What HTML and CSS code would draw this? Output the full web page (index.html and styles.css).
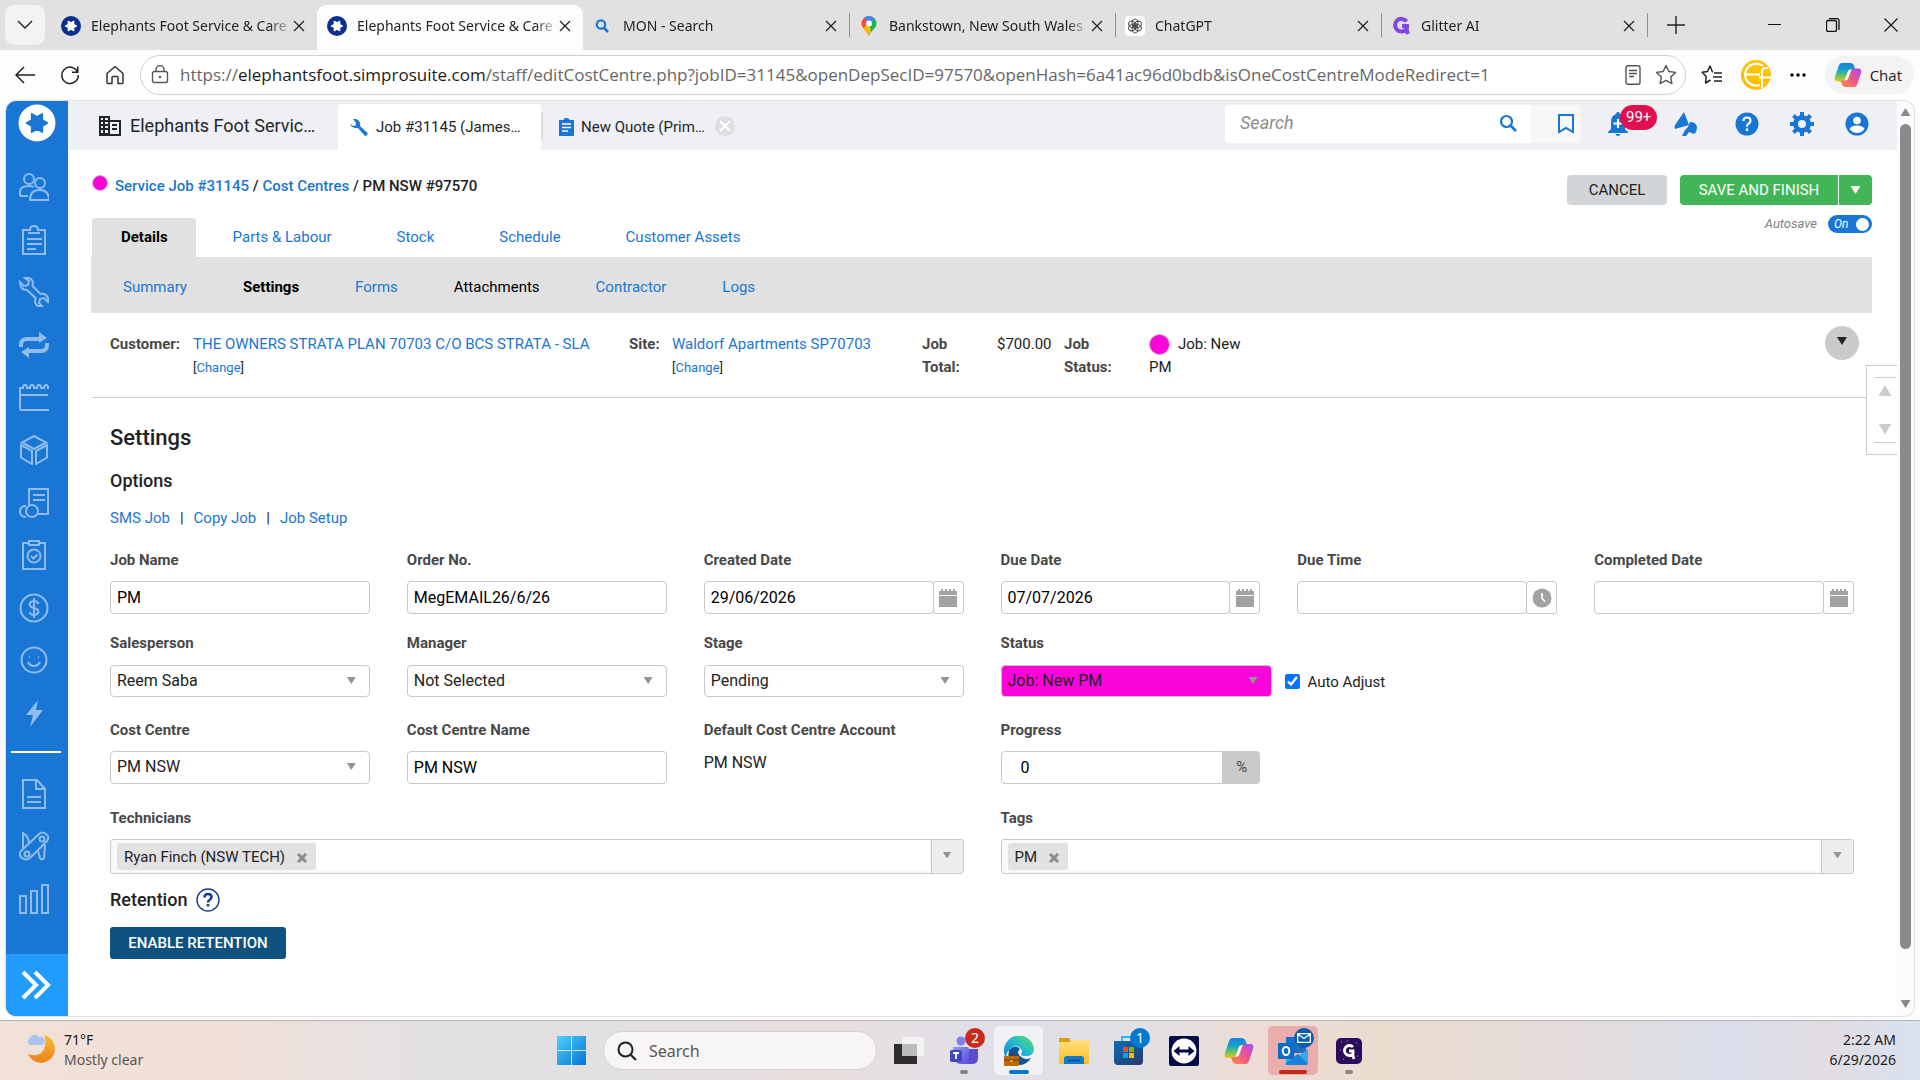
FILE: index.html
```html
<!DOCTYPE html>
<html lang="en">
<head>
<meta charset="utf-8">
<title>Elephants Foot Service &amp; Care</title>
<link rel="stylesheet" href="styles.css">
</head>
<body>
<svg class="defs" aria-hidden="true">
  <defs>
    <linearGradient id="cpa" x1="0" y1="0" x2="0" y2="1"><stop offset="0" stop-color="#1b7fe0"/><stop offset=".4" stop-color="#14a5c8"/><stop offset=".7" stop-color="#6cc35a"/><stop offset="1" stop-color="#f5c31c"/></linearGradient>
    <linearGradient id="cpb" x1="1" y1="0" x2="0" y2="1"><stop offset="0" stop-color="#a54cf0"/><stop offset=".5" stop-color="#f0568a"/><stop offset="1" stop-color="#ff8a3c"/></linearGradient>
    <linearGradient id="win" x1="0" y1="0" x2="1" y2="1"><stop offset="0" stop-color="#4fd0fb"/><stop offset="1" stop-color="#0672d6"/></linearGradient>
    <linearGradient id="moon" x1="0" y1="0" x2="0" y2="1"><stop offset="0" stop-color="#f5c02c"/><stop offset="1" stop-color="#ef7f1d"/></linearGradient>
    <linearGradient id="edge" x1="0" y1="1" x2="1" y2="0"><stop offset="0" stop-color="#1585d8"/><stop offset=".5" stop-color="#21b7d6"/><stop offset="1" stop-color="#5fe05f"/></linearGradient>
    <linearGradient id="fold" x1="0" y1="0" x2="0" y2="1"><stop offset="0" stop-color="#ffe07a"/><stop offset="1" stop-color="#fbbd2d"/></linearGradient>
    <linearGradient id="store" x1="0" y1="0" x2="1" y2="1"><stop offset="0" stop-color="#0c6bb8"/><stop offset="1" stop-color="#2a3a66"/></linearGradient>
    <linearGradient id="teams" x1="0" y1="0" x2="1" y2="1"><stop offset="0" stop-color="#8f9bff"/><stop offset="1" stop-color="#5a4bd8"/></linearGradient>
    <symbol id="close" viewBox="0 0 12 12"><path d="M1 1l10 10M11 1L1 11" fill="none" stroke="#222" stroke-width="1.3"/></symbol>
    <symbol id="star6" viewBox="0 0 20 20"><path d="M18 10L14 12.300 14 16.900 10 14.600 6 16.900 6 12.300 2 10 6 7.700 6 3.100 10 5.400 14 3.100 14 7.700z" stroke="currentColor" stroke-width="1.500" stroke-linejoin="round" fill="currentColor"/></symbol>
    <symbol id="fav" viewBox="0 0 20 20"><circle cx="10" cy="10" r="10" fill="#0b2f8f"/><use href="#star6" x="3" y="3" width="14" height="14" color="#fff"/></symbol>
    <symbol id="copilot" viewBox="0 0 30 28"><path d="M8 1h9c3 0 4 1 5 4l1 3h-5c-2 0-3 1-4 4l-2 6c-1 2-2 3-4 3H4c-3 0-4-2-3-5L5 4c1-2 2-3 3-3z" fill="url(#cpa)"/><path d="M22 27h-9c-3 0-4-1-5-4l-1-3h5c2 0 3-1 4-4l2-6c1-2 2-3 4-3h4c3 0 4 2 3 5l-4 12c-1 2-2 3-3 3z" fill="url(#cpb)"/><path d="M17 9l-4 10" stroke="#fff" stroke-width="2"/></symbol>
    <symbol id="cal" viewBox="0 0 20 20"><path d="M1 3h2V1h2v2h2V1h2v2h2V1h2v2h2V1h2v2h2v4H1zM1 8h18v11H1z" fill="#a2a2a2"/></symbol>
  </defs>
</svg>

<header class="tabstrip">
  <button class="tabmenu" aria-label="Tab actions"><svg width="16" height="10" viewBox="0 0 16 10"><path d="M1 1l7 7 7-7" fill="none" stroke="#222" stroke-width="1.4"/></svg></button>
  <div class="btab"><svg class="bicon"><use href="#fav"/></svg><span class="btext">Elephants Foot Service &amp; Care</span><svg class="bx"><use href="#close"/></svg></div>
  <div class="btab current"><svg class="bicon"><use href="#fav"/></svg><span class="btext">Elephants Foot Service &amp; Care</span><svg class="bx"><use href="#close"/></svg></div>
  <div class="btab"><svg class="bicon" viewBox="0 0 20 20"><circle cx="8" cy="8.500" r="4.200" fill="none" stroke="#1b78d4" stroke-width="2.200"/><path d="M11 12l4 4" stroke="#1b78d4" stroke-width="2.500"/></svg><span class="btext">MON - Search</span><svg class="bx"><use href="#close"/></svg></div>
  <div class="btab split"><svg class="bicon" viewBox="0 0 20 20"><path d="M10 0a7.500 7.500 0 0 0-7.500 7.500c0 5 5.500 6.500 7.500 12.500z" fill="#f0483e"/><path d="M10 0a7.500 7.500 0 0 1 7.500 7.500c0 5-5.500 6.500-7.500 12.500z" fill="#1fb45a"/><path d="M5 2a7.500 7.500 0 0 1 11 1l-6 5z" fill="#4a86f5"/><path d="M4 12l6-5 2 8-2 5c-1-4-4-5-6-8z" fill="#fbbc04"/><circle cx="10" cy="7.500" r="3" fill="#fff"/></svg><span class="btext">Bankstown, New South Wales</span><svg class="bx"><use href="#close"/></svg></div>
  <div class="btab split"><svg class="bicon" viewBox="0 0 20 20"><rect width="20" height="20" rx="4" fill="#fff"/><g fill="none" stroke="#444" stroke-width=".9"><ellipse cx="10" cy="7" rx="3" ry="4"/><ellipse cx="10" cy="7" rx="3" ry="4" transform="rotate(60 10 10)"/><ellipse cx="10" cy="7" rx="3" ry="4" transform="rotate(120 10 10)"/><ellipse cx="10" cy="7" rx="3" ry="4" transform="rotate(180 10 10)"/><ellipse cx="10" cy="7" rx="3" ry="4" transform="rotate(240 10 10)"/><ellipse cx="10" cy="7" rx="3" ry="4" transform="rotate(300 10 10)"/></g></svg><span class="btext">ChatGPT</span><svg class="bx"><use href="#close"/></svg></div>
  <div class="btab split"><svg class="bicon" viewBox="0 0 20 20"><path d="M15.500 5.500A6.300 6.300 0 1 0 16 12v-2h-5M15 12l2 6" fill="none" stroke="#8148e0" stroke-width="4"/></svg><span class="btext">Glitter AI</span><svg class="bx"><use href="#close"/></svg></div>
  <button class="newtab" aria-label="New tab"><svg width="18" height="18" viewBox="0 0 18 18"><path d="M9 0v18M0 9h18" stroke="#222" stroke-width="1.400"/></svg></button>
  <div class="winctl">
    <button aria-label="Minimize"><svg width="14" height="14" viewBox="0 0 14 14"><path d="M0 6.500h13" stroke="#111"/></svg></button>
    <button aria-label="Restore"><svg width="14" height="14" viewBox="0 0 14 14"><rect x=".5" y="2.500" width="10" height="11" rx="1.500" fill="none" stroke="#111" stroke-width="1.300"/><path d="M3 .7h8q2 0 2 2V12" fill="none" stroke="#111" stroke-width="1.300"/></svg></button>
    <button aria-label="Close"><svg width="14" height="14" viewBox="0 0 14 14"><path d="M.5.5l13 13M13.500.5l-13 13" stroke="#111" stroke-width="1.100"/></svg></button>
  </div>
</header>

<div class="toolbar">
  <div class="navbtns">
    <button aria-label="Back"><svg width="20" height="18" viewBox="0 0 20 18"><path d="M20 9H1M9 1L1 9l8 8" fill="none" stroke="#222" stroke-width="1.500"/></svg></button>
    <button aria-label="Refresh"><svg width="20" height="20" viewBox="0 0 20 20"><path d="M17.500 7A8.200 8.200 0 1 0 18.200 10M17.800 1.500V7.200H12" fill="none" stroke="#222" stroke-width="1.500"/></svg></button>
    <button aria-label="Home"><svg width="20" height="20" viewBox="0 0 20 20"><path d="M2 8.500L10 1.500l8 7V17.500q0 1-1 1h-4v-6q0-1-1-1h-4q-1 0-1 1v6H3q-1 0-1-1z" fill="none" stroke="#333" stroke-width="1.500" stroke-linejoin="round"/></svg></button>
  </div>
  <div class="omnibox">
    <svg width="18" height="20" viewBox="0 0 18 20"><rect x="1.500" y="6.500" width="15" height="11" rx="2" fill="none" stroke="#555" stroke-width="1.400"/><path d="M5 6.500V4.500a4 4 0 0 1 8 0v2" fill="none" stroke="#555" stroke-width="1.400"/><circle cx="9" cy="12" r="1.300" fill="#555"/></svg>
    <span class="url">https://<b>elephantsfoot.simprosuite.com</b>/staff/editCostCentre.php?jobID=31145&amp;openDepSecID=97570&amp;openHash=6a41ac96d0bdb&amp;isOneCostCentreModeRedirect=1</span>
    <svg width="16" height="20" viewBox="0 0 16 20"><rect x="1" y=".7" width="14" height="18.600" rx="2" fill="none" stroke="#555" stroke-width="1.400"/><path d="M4 5.500h8M4 8.500h8M4 11.500h5" stroke="#555" stroke-width="1.300"/></svg>
    <svg width="22" height="22" viewBox="0 0 22 22"><path d="M11 1.500l2.900 6 6.600.9-4.800 4.600 1.200 6.600-5.900-3.200-5.900 3.200 1.200-6.600L1.500 8.400l6.600-.9z" fill="none" stroke="#555" stroke-width="1.400" stroke-linejoin="round"/></svg>
  </div>
  <div class="tools">
    <svg width="22" height="22" viewBox="0 0 22 22"><path d="M12 7.800h-.6L9 2 6.500 7.500 1.200 8.200l4 4.300L4.500 19l5-3M13 9h8M12 13h9M13 17h8" fill="none" stroke="#222" stroke-width="1.500" stroke-linejoin="round"/></svg>
    <svg width="30" height="30" viewBox="0 0 30 30"><circle cx="15" cy="15" r="15" fill="#fcc200"/><path d="M22 6A11 11 0 1 0 19 25" fill="none" stroke="#fff" stroke-width="2.200"/><path d="M3 14.500h16M21 28V12q0-4 4-4h2M18 17.500h12" fill="none" stroke="#fff" stroke-width="2"/></svg>
    <svg width="18" height="4" viewBox="0 0 18 4"><circle cx="3" cy="2" r="1.700"/><circle cx="9" cy="2" r="1.700"/><circle cx="15" cy="2" r="1.700"/></svg>
    <button class="chat"><svg width="28" height="26"><use href="#copilot"/></svg>Chat</button>
  </div>
</div>

<div class="frame">
  <aside class="side">
    <a class="logo" href="#" aria-label="Home"><svg width="38" height="38" viewBox="0 0 38 38"><circle cx="19" cy="19" r="18.500" fill="#fff"/><use href="#star6" x="6" y="6" width="26" height="26" color="#1a76d5"/></svg></a>
    <nav class="menu main">
      <a href="#" aria-label="People"><svg viewBox="0 0 30 30"><circle cx="10" cy="7" r="5"/><path d="M1 24v-4q0-6 9-6 3 0 5 1M1 24h8"/><circle cx="21" cy="11" r="5"/><path d="M11 28q0-10 9.500-10T30 28z"/></svg></a>
      <a href="#" aria-label="Quotes"><svg viewBox="0 0 30 30"><path d="M4 5h7q0-4 4-4t4 4h7v24H4zM9 8h12M8 14h15M8 19h15M8 24h9"/></svg></a>
      <a href="#" aria-label="Jobs"><svg viewBox="0 0 30 30"><path d="M1 5l4 4 4-1 1-4-4-3q6-1 8 4l-.5 4 8 8q5-1 7 3 1.500 3 .5 5l-4-4-4 1-1 4 3 3q-6 1-7-4l.5-4-8.500-8Q1 13 1 5z"/></svg></a>
      <a href="#" aria-label="Recurring"><svg viewBox="0 0 30 30"><path class="thick" d="M2 17v-2q0-6 6-6h14M28 13v2q0 6-6 6H8"/><path class="fill" d="M20 2l8 6-8 5zM10 17l-8 5 8 6z"/></svg></a>
      <a href="#" aria-label="Schedules"><svg viewBox="0 0 30 30"><path d="M1 5h3q0-3 2-3t2 3h3q0-3 2-3t2 3h3q0-3 2-3t2 3h3q0-3 2-3t2 3h2v21q0 1-1 1H2q-1 0-1-1zM1 12h28" /></svg></a>
      <a href="#" aria-label="Stock"><svg viewBox="0 0 30 30"><path d="M15 1l12 6.500L15 14 3 7.500zM2 10l11 6v13L2 22.500zM28 10l-11 6v13l11-6.500z"/></svg></a>
      <a href="#" aria-label="Accounts"><svg viewBox="0 0 30 30"><path d="M10 17V1h19v25H18M14 7h12M14 12h12"/><circle cx="13" cy="23" r="6"/><path d="M7 18q-6 0-6 5.500T7 29"/></svg></a>
      <a href="#" aria-label="Tasks"><svg viewBox="0 0 30 30"><path d="M10 3H4v26h22V3h-6M10 1h10v4H10z"/><circle cx="15" cy="16" r="6.500"/><path d="M12 16l2.500 2.500 4-4"/></svg></a>
      <a href="#" aria-label="Payments"><svg viewBox="0 0 30 30"><circle cx="15" cy="15" r="13.500"/><path d="M19.500 11q-1-3-4.500-3t-4.500 3q0 3 4.500 4t4.500 4q-1 3-4.500 3t-4.500-3M15 5v20"/></svg></a>
      <a href="#" aria-label="Feedback"><svg viewBox="0 0 30 30"><circle cx="15" cy="15" r="12.500"/><path d="M9 17q2 4 6 4t6-4M10 12h1M19 12h1"/></svg></a>
      <a href="#" aria-label="Activity"><svg viewBox="0 0 30 30"><path class="fill" d="M19 2L7 17h7l-3 12L24 12h-7z"/></svg></a>
    </nav>
    <hr class="rule">
    <nav class="menu sub">
      <a href="#" aria-label="Forms"><svg viewBox="0 0 30 30"><path d="M4 1h14l8 9v19H4zM17 1v9h9M8 18h14M8 23h14"/></svg></a>
      <a href="#" aria-label="Utilities"><svg viewBox="0 0 30 30"><path d="M2 20L20 3q3-3 7 0t1 7L11 27q-4 3-8 0t-1-7z"/><circle cx="8" cy="23" r="2.500"/><circle cx="23" cy="8" r="2.500"/><path d="M4 17V2q6 4 6 10M19 20l2 7q2 3 4 0l1-13"/></svg></a>
      <a href="#" aria-label="Reports"><svg viewBox="0 0 30 30"><path d="M1 12h6v17H1zM12 7h6v22h-6zM23 1h6v28h-6z"/></svg></a>
    </nav>
    <button class="expand" aria-label="Expand menu"><svg width="30" height="30" viewBox="0 0 30 30"><path d="M2 2l13 13L2 28M14 2l13 13-13 13" fill="none" stroke="#fff" stroke-width="4"/></svg></button>
  </aside>

  <div class="app">
    <header class="topbar">
      <a class="company" href="#"><svg width="22" height="20" viewBox="0 0 22 20"><path d="M0 0h11v4h11v16H0z" fill="#22262c"/><path d="M2 2h2v2H2zM6 2h3v2H6zM2 6h2v2H2zM6 6h3v2H6zM2 10h2v2H2zM6 10h3v2H6zM2 14h2v3H2zM6 14h3v3H6zM11 6h9v12h-9z" fill="#eff0f3"/><path d="M13 8h5v2h-5zM13 12h5v2h-5z" fill="#22262c"/></svg>Elephants Foot Servic…</a>
      <a class="doc open" href="#"><svg width="19" height="19" viewBox="0 0 19 19"><path d="M6 1a5.500 5.500 0 0 1 4 7l8 7.500L15.500 18.500 8 10Q2 11 0 5.500l3 2.500 2.500-.5L6 5 3 1z" fill="#1a76d5"/></svg>Job #31145 (James…</a>
      <a class="doc" href="#"><svg width="15" height="18" viewBox="0 0 15 18"><path d="M0 2h4.500q0-2 3-2t3 2H15v16H0z" fill="#1a76d5"/><path d="M3 6h9M3 9.500h9M3 13h6" stroke="#fff" stroke-width="1.500"/></svg>New Quote (Prim…</a>
      <button class="shut" aria-label="Close tab"><svg width="20" height="20" viewBox="0 0 20 20"><circle cx="10" cy="10" r="10" fill="#dedede"/><path d="M5 5l10 10M15 5L5 15" stroke="#fff" stroke-width="2"/></svg></button>
      <div class="find"><input type="text" placeholder="Search" aria-label="Search"><svg width="18" height="18" viewBox="0 0 18 18"><circle cx="7.500" cy="7.500" r="5.500" fill="none" stroke="#1a76d5" stroke-width="2.200"/><path d="M11.500 11.500L17 17" stroke="#1a76d5" stroke-width="2.600"/></svg></div>
      <button class="mark" aria-label="Bookmark"><svg width="16" height="20" viewBox="0 0 16 20"><path d="M1 1h14v17l-7-4-7 4z" fill="none" stroke="#1a76d5" stroke-width="2"/></svg></button>
      <div class="acts">
        <button class="bell" aria-label="Notifications"><svg width="24" height="24" viewBox="0 0 24 24"><path d="M12 0q2 0 2 2 5 2 5 8v7l3 3v1H2v-1l3-3v-7q0-6 5-8 0-2 2-2zM9.500 22h5q-.5 2-2.500 2t-2.500-2z" fill="#1a76d5"/><path d="M12 7v9M7.500 11.500h9" stroke="#fff" stroke-width="2"/></svg><span class="badge">99+</span></button>
        <button class="horn" aria-label="Announcements"><svg width="24" height="24" viewBox="0 0 24 24"><path d="M10 0l5 13L1 17q-1-2 0-4zM14 15l2-5q6 0 7 5 0 5-3 7l-5-2-3 4H8l3-6z" fill="#1a76d5"/></svg></button>
        <button aria-label="Help"><svg width="24" height="24" viewBox="0 0 24 24"><circle cx="12" cy="12" r="11.500" fill="#1a76d5"/><path d="M8.500 9q0-3.500 3.500-3.500t3.500 3q0 2-2 3.200-1.500 1-1.500 3M12 16.500v2.500" fill="none" stroke="#fff" stroke-width="2.200"/></svg></button>
        <button aria-label="Settings"><svg width="24" height="24" viewBox="0 0 24 24"><circle cx="12" cy="12" r="6.500" fill="none" stroke="#1a76d5" stroke-width="5"/><path d="M12 0v4M12 20v4M0 12h4M20 12h4M3.500 3.500l3 3M17.500 17.500l3 3M3.500 20.500l3-3M17.500 6.500l3-3" stroke="#1a76d5" stroke-width="4"/></svg></button>
        <button aria-label="Account"><svg width="24" height="24" viewBox="0 0 24 24"><circle cx="12" cy="12" r="11.500" fill="#1a76d5"/><circle cx="12" cy="8.500" r="3.800" fill="#fff"/><path d="M4.500 17q1.500-3.500 7.500-3.500t7.500 3.500q-3 4-7.500 4T4.500 17z" fill="#fff"/></svg></button>
      </div>
    </header>

    <main class="content">
      <div class="pagehead">
        <div class="crumbs"><i class="dot"></i><span><a href="#">Service Job #31145</a> / <a href="#">Cost Centres</a> / PM NSW #97570</span></div>
        <div class="saving">
          <div class="btnrow"><button class="cancel">CANCEL</button><div class="savegrp"><button class="save">SAVE AND FINISH</button><button class="more" aria-label="More save options"><i class="tri"></i></button></div></div>
          <label class="auto">Autosave <span class="switch"><input type="checkbox" checked>On</span></label>
        </div>
        <nav class="tabs"><a class="on" href="#">Details</a><a href="#">Parts &amp; Labour</a><a href="#">Stock</a><a href="#">Schedule</a><a href="#">Customer Assets</a></nav>
      </div>
      <nav class="subtabs"><a href="#">Summary</a><a class="on" href="#">Settings</a><a href="#">Forms</a><a class="dark" href="#">Attachments</a><a href="#">Contractor</a><a href="#">Logs</a></nav>

      <section class="info">
        <b class="w-cust">Customer:</b>
        <div class="v-cust"><a href="#">THE OWNERS STRATA PLAN 70703 C/O BCS STRATA - SLA</a><br><small>[<a href="#">Change</a>]</small></div>
        <b class="w-site">Site:</b>
        <div class="v-site"><a href="#">Waldorf Apartments SP70703</a><br><small>[<a href="#">Change</a>]</small></div>
        <b class="w-total">Job<br>Total:</b>
        <div class="v-total">$700.00</div>
        <b class="w-stat">Job<br>Status:</b>
        <div class="v-stat"><span class="newrow"><i class="dot big"></i>Job: New</span>PM</div>
        <button class="round" aria-label="Show more"><i class="tri"></i></button>
      </section>
      <div class="jump"><button aria-label="Scroll to top"><i class="tri up"></i></button><button aria-label="Scroll to bottom"><i class="tri"></i></button></div>

      <section class="form">
        <h1>Settings</h1>
        <h2>Options</h2>
        <div class="links"><a href="#">SMS Job</a><span>|</span><a href="#">Copy Job</a><span>|</span><a href="#">Job Setup</a></div>

        <div class="row first">
          <div><label for="jn">Job Name</label><input id="jn" class="ctl" value="PM"></div>
          <div><label for="on">Order No.</label><input id="on" class="ctl" value="MegEMAIL26/6/26"></div>
          <div><label for="cd">Created Date</label><div class="pick"><input id="cd" class="ctl" value="29/06/2026"><button aria-label="Pick created date"><svg width="20" height="20"><use href="#cal"/></svg></button></div></div>
          <div><label for="dd">Due Date</label><div class="pick"><input id="dd" class="ctl" value="07/07/2026"><button aria-label="Pick due date"><svg width="20" height="20"><use href="#cal"/></svg></button></div></div>
          <div><label for="dt">Due Time</label><div class="pick"><input id="dt" class="ctl"><button aria-label="Pick due time"><svg width="20" height="20" viewBox="0 0 20 20"><circle cx="10" cy="10" r="9.500" fill="#a2a2a2"/><path d="M10 5v5.500l3 3" fill="none" stroke="#fff" stroke-width="1.600"/></svg></button></div></div>
          <div><label for="fd">Completed Date</label><div class="pick"><input id="fd" class="ctl"><button aria-label="Pick completed date"><svg width="20" height="20"><use href="#cal"/></svg></button></div></div>
        </div>

        <div class="row second">
          <div><label for="sp">Salesperson</label><div class="sel"><select id="sp"><option>Reem Saba</option></select></div></div>
          <div><label for="mg">Manager</label><div class="sel"><select id="mg"><option>Not Selected</option></select></div></div>
          <div><label for="st">Stage</label><div class="sel"><select id="st"><option>Pending</option></select></div></div>
          <div class="span2"><label for="ss">Status</label><div class="statrow"><div class="sel pink"><select id="ss"><option>Job: New PM</option></select></div><label class="adjust"><input type="checkbox" checked>Auto Adjust</label></div></div>
        </div>

        <div class="row third">
          <div><label for="cc">Cost Centre</label><div class="sel"><select id="cc"><option>PM NSW</option></select></div></div>
          <div><label for="cn">Cost Centre Name</label><input id="cn" class="ctl" value="PM NSW"></div>
          <div><span class="lab">Default Cost Centre Account</span><p class="plain">PM NSW</p></div>
          <div><label for="pg">Progress</label><div class="pick pct"><input id="pg" class="ctl" value="0"><span>%</span></div></div>
        </div>

        <div class="row fourth">
          <div class="span3"><label for="tc">Technicians</label><div class="chips"><span class="chip">Ryan Finch (NSW TECH)<button aria-label="Remove Ryan Finch"><svg width="10" height="10" viewBox="0 0 10 10"><path d="M1 1l8 8M9 1L1 9" stroke="#8c8c8c" stroke-width="3"/></svg></button></span><input id="tc"><button class="drop" aria-label="Choose technicians"><i class="tri"></i></button></div></div>
          <div class="span3"><label for="tg">Tags</label><div class="chips"><span class="chip">PM<button aria-label="Remove PM"><svg width="10" height="10" viewBox="0 0 10 10"><path d="M1 1l8 8M9 1L1 9" stroke="#8c8c8c" stroke-width="3"/></svg></button></span><input id="tg"><button class="drop" aria-label="Choose tags"><i class="tri"></i></button></div></div>
        </div>

        <h2 class="ret">Retention <svg width="24" height="24" viewBox="0 0 24 24"><circle cx="12" cy="12" r="11" fill="none" stroke="#173d96" stroke-width="1.400"/><path d="M8.500 9.500q0-3.500 3.500-3.500t3.500 3q0 1.800-2 3-1.500 1-1.500 2.500M12 16v2.500" fill="none" stroke="#173d96" stroke-width="2.600"/></svg></h2>
        <button class="enable">ENABLE RETENTION</button>
      </section>
    </main>
  </div>

  <div class="scroll" aria-hidden="true"><i class="tri up"></i><div class="track"><div class="thumb"></div></div><i class="tri"></i></div>
</div>

<footer class="taskbar">
  <div class="weather"><svg width="30" height="30" viewBox="0 0 30 30"><path d="M19 2a14 14 0 1 1-16 19q12 4 16-5 3-7 0-14z" fill="url(#moon)"/><path d="M5 12a4 4 0 0 1 0-7 5 5 0 0 1 9-1 4 4 0 0 1 3 8z" fill="#a9c4f2"/></svg><div>71°F<br><span>Mostly clear</span></div></div>
  <div class="apps">
    <button aria-label="Start"><svg width="29" height="29" viewBox="0 0 29 29"><path d="M0 0h14v14H0zM15 0h14v14H15zM0 15h14v14H0zM15 15h14v14H15z" fill="url(#win)"/></svg></button>
    <label class="tsearch"><svg width="20" height="20" viewBox="0 0 20 20"><circle cx="8.500" cy="8.500" r="7" fill="none" stroke="#222" stroke-width="2"/><path d="M13.500 13.500l5.500 5.500" stroke="#222" stroke-width="2.200"/></svg><input placeholder="Search" aria-label="Taskbar search"></label>
    <button aria-label="Task view"><svg width="30" height="30" viewBox="0 0 30 30"><path d="M0 8h23v20H0z" fill="#2e2e2e"/><path d="M8 1h22v19H8z" fill="#fff" fill-opacity=".6"/><path d="M8 8h15v12H8z" fill="#bbb"/></svg></button>
    <button class="run" aria-label="Teams"><svg width="30" height="30" viewBox="0 0 30 30"><circle cx="12" cy="5" r="4.500" fill="#7b83eb"/><path d="M18 13h11v9q0 6-6 6h-6z" fill="#5b4ed0"/><path d="M4 11h14q2 0 2 2v15h-8q-7 0-8-8z" fill="url(#teams)"/><rect x="1" y="14" width="12" height="12" rx="2" fill="#4048b8"/><path d="M4 17h6M7 17v6" stroke="#fff" stroke-width="1.800"/></svg><span class="cnt red">2</span></button>
    <button class="run tile" aria-label="Edge"><svg width="30" height="30" viewBox="0 0 30 30"><path d="M0 15A15 15 0 0 1 30 14q-1 6-8 6-5 0-5-2 2-2 0-5-5-6-12 1Q1 18 3 23q-3-3-3-8z" fill="url(#edge)"/><path d="M5 14q6-6 11-1-4 3 0 7 5 5 11 2-5 8-14 7Q3 26 5 14z" fill="#12559c"/><rect y="20" width="15" height="10" rx="1" fill="#bd6a0c"/><path d="M0 24h15M5 20v-2h5v2" fill="none" stroke="#6d3903"/><circle cx="7.500" cy="25" r="1" fill="#ffd75a"/></svg></button>
    <button aria-label="File Explorer"><svg width="30" height="28" viewBox="0 0 30 28"><path d="M0 2q0-1 1-1h9l2 3v5H0z" fill="#dd9a10"/><path d="M0 5h10l3-2h16q1 0 1 1v22q0 1-1 1H1q-1 0-1-1z" fill="url(#fold)"/><path d="M5 27v-5q0-3 3-3h14q3 0 3 3v5z" fill="#1577c8"/><path d="M9 23.500h12" stroke="#0b4c8c" stroke-width="1.500"/></svg></button>
    <button aria-label="Store"><svg width="30" height="30" viewBox="0 0 30 30"><path d="M8 5V1h13v4" fill="none" stroke="#30b5e8" stroke-width="2"/><path d="M0 5h29v20q0 4-4 4H4q-4 0-4-4z" fill="url(#store)"/><path d="M9 11h5v5H9z" fill="#f25022"/><path d="M15 11h5v5h-5z" fill="#7fba00"/><path d="M9 17h5v5H9z" fill="#00a4ef"/><path d="M15 17h5v5h-5z" fill="#ffb900"/></svg><span class="cnt blue">1</span></button>
    <button aria-label="TeamViewer"><svg width="30" height="30" viewBox="0 0 30 30"><rect width="30" height="30" rx="2" fill="#030a48"/><circle cx="15" cy="15" r="12.500" fill="#fff"/><path d="M4.500 15l6-5v3.500h9V10l6 5-6 5v-3.500h-9V20z" fill="#030a48"/></svg></button>
    <button aria-label="Copilot"><svg width="30" height="28"><use href="#copilot"/></svg></button>
    <button class="run alert" aria-label="Outlook"><svg width="30" height="30" viewBox="0 0 30 30"><path d="M8 1h20v16H8z" fill="#1a6fc4"/><path d="M8 13l11 8 11-8v14q0 2-2 2H8z" fill="#35a9ec"/><path d="M8 27l12-9 10 10q-1 1-2 1H8z" fill="#1682d8"/><rect y="7" width="16" height="16" rx="1" fill="#0f6cc0"/><ellipse cx="8" cy="15" rx="3.300" ry="4" fill="none" stroke="#fff" stroke-width="2"/></svg><span class="cnt mail"><svg width="14" height="10" viewBox="0 0 14 10"><path d="M.7.7h12.600v8.600H.7zM.7 1L7 5.500 13.300 1" fill="none" stroke="#fff" stroke-width="1.300"/></svg></span></button>
    <button class="run" aria-label="Glitter"><svg width="26" height="26" viewBox="0 0 26 26"><rect width="26" height="26" rx="5" fill="#2a0b5c"/><path d="M17 9a5 5 0 1 0 0 7v-3h-4M16 15l2 6" fill="none" stroke="#fff" stroke-width="2.800"/><path d="M5 4h1M20 5h1M4 12h1M21 18h1M7 21h1M11 3h1" stroke="#b99af0" stroke-width="1.200"/></svg></button>
  </div>
  <div class="clock">2:22 AM<br>6/29/2026</div>
</footer>
</body>
</html>
```

FILE: styles.css
```css
* { box-sizing: border-box; }
body {
  margin: 0;
  height: 100vh;
  display: flex;
  flex-direction: column;
  background: #fdfdfd;
  font: 15px/24px Roboto, sans-serif;
  color: #222;
  overflow: hidden;
}
button { border: 0; background: none; padding: 0; margin: 0; font: inherit; color: inherit; display: flex; align-items: center; justify-content: center; }
input, select { font: inherit; color: inherit; margin: 0; min-width: 0; }
a { color: #1a76d5; text-decoration: none; }
svg { flex: none; }
.defs { position: absolute; width: 0; height: 0; }
.tri { width: 10px; height: 8px; background: currentColor; clip-path: polygon(0 0, 100% 0, 50% 100%); flex: none; }
.tri.up { clip-path: polygon(50% 0, 100% 100%, 0 100%); }

/* Browser tab strip */
.tabstrip { display: flex; height: 50px; padding: 5px 0 0 5px; background: #e1e1e1; font: 14px/22px "Noto Sans", sans-serif; }
.tabmenu { width: 40px; height: 40px; border-radius: 9px; background: #f3f3f3; margin-right: 6px; }
.btab { flex: 0 1 266px; display: flex; align-items: center; padding: 0 12px 4px 10px; position: relative; min-width: 0; }
.btab.current { background: #fdfdfd; border-radius: 9px 9px 0 0; }
.bicon { width: 20px; height: 20px; margin-right: 10px; }
.btext { flex: 1; white-space: nowrap; overflow: hidden; -webkit-mask-image: linear-gradient(to right, #000 88%, transparent); mask-image: linear-gradient(to right, #000 88%, transparent); }
.bx { width: 12px; height: 12px; }
.split::before { content: ""; position: absolute; left: 0; top: 8px; width: 1px; height: 24px; background: #909090; }
.newtab { width: 52px; height: 24px; margin-top: 8px; padding: 0 10px 0 14px; border-left: 1px solid #909090; }
.winctl { margin-left: auto; display: flex; height: 40px; }
.winctl button { width: 58px; }

/* Address bar */
.toolbar { display: flex; align-items: center; height: 50px; font: 17px/24px "Open Sans", sans-serif; }
.navbtns { display: flex; width: 140px; padding-left: 15px; gap: 25px; }
.omnibox { flex: 1; display: flex; align-items: center; height: 40px; padding: 0 8px 0 10px; gap: 11px; border: 1px solid #cfcfcf; border-radius: 20px; background: #fff; min-width: 0; }
.omnibox svg + svg { margin-left: 3px; }
.url { flex: 1; white-space: nowrap; overflow: hidden; color: #666; }
.url b { font-weight: 400; color: #1b1b1b; }
.tools { display: flex; align-items: center; padding: 0 6px 0 15px; gap: 18px; }
.chat { height: 38px; padding: 0 12px 0 9px; gap: 8px; border-radius: 19px; background: #f3f3f3; font-size: 15px; }

/* Page frame */
.frame { flex: 1; display: flex; margin: 1px 6px 4px; min-height: 0; border-radius: 10px; overflow: hidden; background: #fff; box-shadow: 0 0 2px #999; }
.side { width: 62px; flex: none; display: flex; flex-direction: column; background: #1a76d5; }
.logo { height: 60px; display: flex; justify-content: center; padding-top: 3px; }
.menu { display: flex; flex-direction: column; }
.menu.main { flex: 11; }
.menu.sub { flex: 3; margin-bottom: 29px; }
.menu a { flex: 1; display: flex; align-items: center; justify-content: center; padding-right: 6px; }
.menu svg { width: 30px; height: 30px; fill: none; stroke: #8fbcec; stroke-width: 2; }
.menu .thick { stroke-width: 4; }
.menu .fill { fill: #8fbcec; stroke: none; }
.rule { width: 50px; margin: 12px 0 14px 5px; border: 0; border-top: 2px solid #fff; }
.expand { height: 62px; padding-right: 2px; background: #229bff; }

.app { flex: 1; min-width: 0; display: flex; flex-direction: column; }
.topbar { height: 49px; display: flex; align-items: center; background: #eff0f3; padding-right: 28px; }
.company { width: 270px; padding-left: 31px; display: flex; align-items: center; gap: 9px; font-size: 18px; color: #22262c; white-space: nowrap; }
.doc { display: flex; align-items: center; gap: 7px; padding: 3px 12px 0 16px; border-left: 2px solid #dcdde0; height: 28px; font-size: 15px; color: #22262c; white-space: nowrap; }
.doc.open { align-self: flex-end; height: 46px; width: 203px; padding: 0 12px; background: #fff; border: 0; border-radius: 4px 4px 0 0; }
.shut { margin-left: -2px; }
.find { margin: 0 0 3px auto; display: flex; align-items: center; width: 306px; height: 38px; background: #fff; border-radius: 4px 0 0 4px; padding: 0 14px 2px 15px; }
.find input { flex: 1; border: 0; background: none; padding: 0; font: italic 18px/24px Roboto, sans-serif; }
.find input::placeholder { color: #8c8c8c; opacity: 1; }
.mark { width: 50px; height: 38px; margin-bottom: 3px; padding-left: 20px; background: #f7f7f8; border-radius: 0 4px 4px 0; }
.acts { display: flex; gap: 31px; margin: 0 0 4px 25px; }
.acts button { position: relative; }
.acts .bell { margin-right: 13px; }
.acts .horn { margin-right: 6px; }
.badge { position: absolute; left: 14px; top: -7px; background: #e0104f; color: #fff; border-radius: 13px; padding: 0 6px; font-size: 15px; line-height: 25px; }

/* Job page */
.content { padding: 24px 25px 0 23px; position: relative; flex: 1; }
.pagehead { display: grid; grid-template-columns: 1fr auto; grid-template-rows: 44px 39px; }
.crumbs { display: flex; align-items: flex-start; gap: 7px; font-weight: 500; font-size: 15px; padding-left: 1px; }
.dot { width: 16px; height: 16px; border-radius: 50%; background: #f905da; border: 1px solid #d8a8d0; flex: none; }
.crumbs .dot { margin-top: 1px; }
.saving { grid-row: 1 / 3; grid-column: 2; padding-top: 1px; }
.btnrow { display: flex; gap: 13px; }
.btnrow button { height: 30px; font-size: 15px; }
.cancel { width: 100px; background: #d2d5d8; border-radius: 4px; }
.savegrp { display: flex; gap: 1px; color: #fff; }
.save { width: 158px; background: #42b556; border-radius: 4px 0 0 4px; }
.more { width: 33px; background: #42b556; border-radius: 0 4px 4px 0; }
.auto { display: flex; justify-content: flex-end; align-items: center; gap: 11px; margin-top: 10px; font: italic 13px/18px Roboto, sans-serif; color: #808080; }
.switch { display: flex; align-items: center; width: 44px; height: 18px; padding: 0 3px 0 6px; justify-content: space-between; flex-direction: row-reverse; border-radius: 9px; background: #1a76d5; color: #fff; font-size: 12px; }
.switch input { appearance: none; width: 13px; height: 13px; border-radius: 50%; background: #fff; }
.tabs { display: flex; padding-left: 1px; }
.tabs a, .subtabs a { font-size: 15px; }
.tabs a { padding: 7px 28px 8px 37px; }
.tabs a.on { background: #e1e1e1; border-radius: 3px 3px 0 0; color: #000; font-weight: 700; padding-left: 29px; }
.subtabs { display: flex; align-items: center; gap: 56px; height: 56px; padding: 3px 0 0 32px; background: #e1e1e1; }
.subtabs .on { font-weight: 700; color: #000; }
.subtabs .dark { color: #000; }

.info { display: flex; margin: 0 5px 0 1px; padding: 20px 8px 17px 18px; min-height: 85px; border-bottom: 1px solid #cbcbcb; line-height: 23px; }
.info b { font-weight: 700; color: #484848; }
.info small { font-size: 13px; }
.w-cust { width: 83px; }
.v-cust { width: 436px; }
.w-site { width: 43px; }
.v-site { width: 250px; }
.w-total { width: 75px; }
.v-total { width: 67px; }
.w-stat { width: 85px; }
.v-stat { width: 100px; }
.newrow { display: flex; align-items: center; gap: 8px; }
.dot.big { width: 21px; height: 21px; }
.round { margin: -7px 0 0 auto; width: 34px; height: 34px; border-radius: 50%; background: #cacaca; }
.round .tri { margin-bottom: 4px; }
.jump { position: absolute; right: 0; top: 215px; width: 31px; height: 90px; padding: 11px 0 11px 7px; border: 1px solid #cbcbcb; border-right: 0; background: #fff; display: flex; flex-direction: column; justify-content: space-between; color: #cbcbcb; }
.jump button { width: 22px; height: 22px; border-top: 1px solid #cbcbcb; padding-top: 4px; }
.jump button + button { border-top: 0; border-bottom: 1px solid #cbcbcb; padding: 0 0 5px; }
.jump .tri { width: 13px; height: 11px; }

.form { padding: 0 18px 0 19px; }
h1 { margin: 25px 0 0; font: 500 22px/30px Roboto, sans-serif; }
h2 { margin: 16px 0 0; font: 500 18px/24px Roboto, sans-serif; }
.links { display: flex; gap: 10px; margin-top: 13px; }
.row { display: grid; grid-template-columns: repeat(6, 1fr); column-gap: 37px; }
.row label, .lab { display: block; font-weight: 700; color: #484848; line-height: 20px; margin-bottom: 11px; }
.row.first { margin-top: 20px; }
.row.second { margin-top: 19px; }
.row.second > div > label { margin-bottom: 12px; }
.row.third { margin-top: 23px; }
.row.fourth { margin-top: 24px; }
.span2 { grid-column: span 2; }
.span3 { grid-column: span 3; }
.ctl { display: block; width: 100%; height: 33px; border: 1px solid #c8c8c8; border-radius: 4px; padding: 0 6px; background: #fff; font-size: 16px; color: #000; }
.pick { display: flex; }
.pick .ctl { flex: 1; }
.pick button { width: 31px; margin-left: -1px; border: 1px solid #c8c8c8; border-radius: 3px; background: #fff; }
.pct .ctl { padding-left: 19px; border-radius: 4px 0 0 4px; }
.pct span { width: 37px; background: #cacaca; border-radius: 0 4px 4px 0; text-align: center; line-height: 33px; color: #484848; }
.sel { position: relative; height: 32px; border: 1px solid #c8c8c8; border-radius: 4px; }
.third .sel { height: 33px; }
.sel::after { content: ""; position: absolute; right: 13px; top: 11px; width: 9px; height: 7px; background: #949494; clip-path: polygon(0 0, 100% 0, 50% 100%); }
.sel select { appearance: none; display: block; width: 100%; height: 29px; border: 0; background: none; padding: 0 6px; font-size: 16px; color: #222; }
.pink { width: 271px; background: #f905da; }
.statrow { display: flex; gap: 13px; }
.row .adjust { display: flex; align-items: center; gap: 8px; margin: 0; padding-top: 1px; font-weight: 400; color: #222; }
.adjust input { width: 15px; height: 15px; accent-color: #0075ff; }
.plain { margin: 0; font-size: 16px; }
.chips { display: flex; height: 35px; border: 1px solid #c8c8c8; border-radius: 3px; padding: 3px 0 3px 6px; background: #f8f9fb; overflow: hidden; }
.chips input { flex: 1; border: 0; background: #fff; margin-top: -3px; }
.chip { display: flex; align-items: center; gap: 12px; background: #e2e2e2; border-radius: 3px; padding: 0 9px 0 7px; line-height: 26px; }
.chip button { margin-top: 3px; }
.drop { width: 32px; margin: -3px 0 -3px 2px; border-left: 1px solid #c8c8c8; background: #eee; color: #949494; }
.chips .drop .tri { width: 9px; height: 7px; margin-bottom: 3px; }
.ret { display: flex; align-items: center; gap: 9px; margin-top: 14px; }
.enable { height: 32px; width: 176px; margin-top: 15px; border-radius: 3px; background: #0f5280; color: #fff; font-weight: 500; }

.scroll { width: 17px; padding: 7px 0 8px; display: flex; flex-direction: column; align-items: center; gap: 8px; background: #fbfbfb; color: #8a8a8a; }
.track { flex: 1; display: flex; padding-bottom: 43px; }
.thumb { width: 11px; border-radius: 6px; background: #8a8a8a; }

/* Taskbar */
.taskbar { flex: none; height: 60px; display: grid; grid-template-columns: 1fr auto 1fr; border-top: 1px solid #b3b3b5; background: linear-gradient(90deg, #f2e1d8 0, #f0e0d8 12%, #e4e1e4 22%, #e2dfe3 34%, #eadfde 42%, #e0dfe8 52%, #e2e0e2 60%, #eddcd6 65%, #ebdccf 72%, #e4dcdc 82%, #dadfeb 90%, #e2dde3 95%, #d8e2ee 100%); font: 15px/20px "Noto Sans", sans-serif; color: #1b1b1b; }
.weather { display: flex; gap: 9px; padding: 9px 0 0 25px; font-size: 14px; }
.weather svg { margin-top: 3px; }
.weather span { color: #555; }
.apps { display: flex; align-items: center; }
.apps button { width: 55px; height: 49px; position: relative; }
.tsearch { display: flex; align-items: center; gap: 12px; width: 274px; height: 39px; margin: 0 4px; padding: 0 13px; border-radius: 20px; background: #f7f5f5; border: 1px solid #d5cfd0; }
.tsearch input { flex: 1; border: 0; background: none; padding: 0; font-size: 16px; }
.tsearch input::placeholder { color: #555; opacity: 1; }
.cnt { position: absolute; right: 6px; top: 2px; width: 20px; height: 20px; border-radius: 50%; color: #fff; font-size: 14px; line-height: 20px; display: flex; align-items: center; justify-content: center; }
.red { background: #c42b1c; }
.blue { background: #0078d4; }
.mail { background: #0a5cb0; right: 4px; }
.run::after { content: ""; position: absolute; left: 50%; bottom: 1px; width: 8px; height: 4px; margin-left: -4px; border-radius: 2px; background: #858585; }
.apps .tile { width: 49px; margin: 0 3px; background: #f2f1f4; border-radius: 5px; }
.tile::after { width: 20px; margin-left: -10px; background: #0078d4; }
.apps .alert { width: 50px; margin: 0 3px 0 2px; background: #e9adab; border-radius: 5px; }
.alert::after { width: 28px; margin-left: -14px; background: #c42b1c; }
.clock { justify-self: end; text-align: right; padding: 9px 24px 0 0; font-size: 14px; }
```
